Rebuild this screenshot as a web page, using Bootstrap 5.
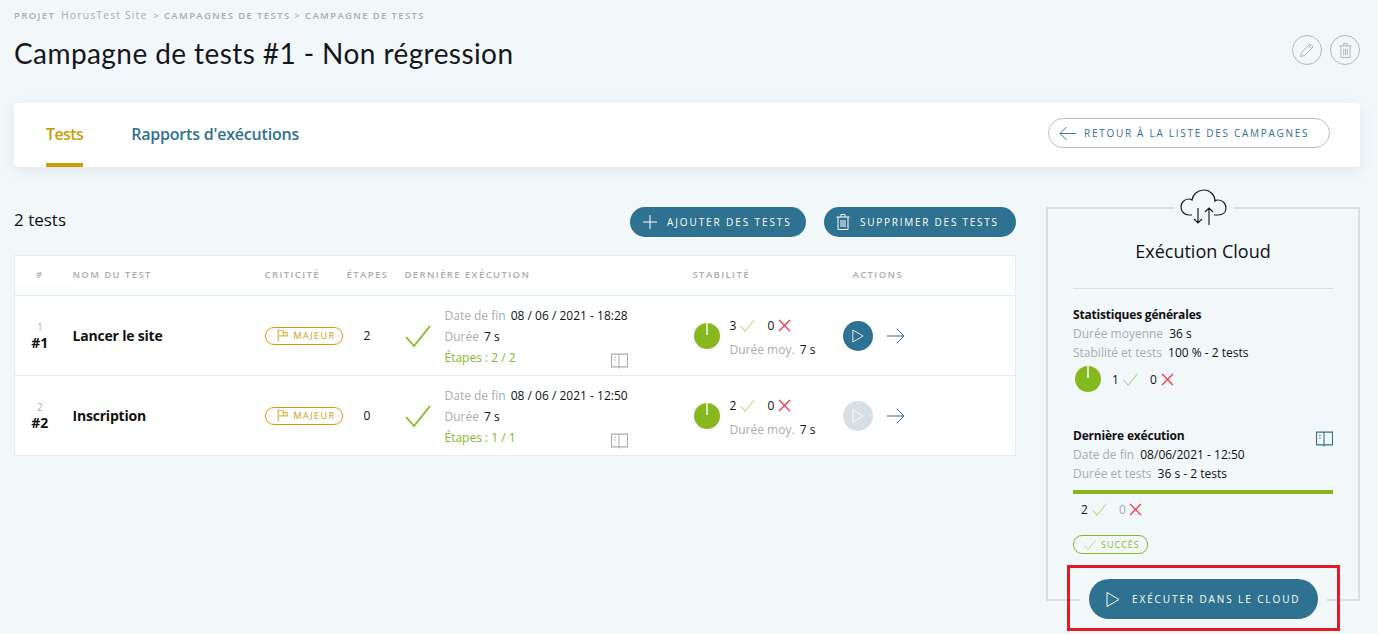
<!DOCTYPE html>
<html lang="fr">
<head>
  <meta charset="UTF-8">
  <meta name="viewport" content="width=device-width, initial-scale=1.0">
  <title>Campagne de tests</title>
  <link href="https://cdn.jsdelivr.net/npm/bootstrap@5.3.5/dist/css/bootstrap.min.css" rel="stylesheet">
  <script src="https://cdn.jsdelivr.net/npm/bootstrap@5.3.5/dist/js/bootstrap.bundle.min.js"></script>
  <style>
    body { background: #f2f7fa; font-family: "Open Sans", "Noto Sans", sans-serif; font-size: 12px; color: #111; overflow: hidden; }
    .page-wrap { padding: 0 18px 0 14px; height: 634px; }
    svg { fill: none; stroke: currentColor; stroke-width: 1; flex: none; }
    .crumbs { height: 30px; padding-top: 9px; font-size: 9.5px; line-height: 13px; letter-spacing: 1.38px; color: #a9adb1; font-weight: 600; text-transform: uppercase; }
    .crumbs .site-name { font-size: 10.5px; font-weight: 400; letter-spacing: 1.1px; text-transform: none; margin: 0 2px; }
    .title-bar { height: 73px; }
    .page-title { font-family: Lato, sans-serif; font-size: 28px; font-weight: 400; letter-spacing: .42px; line-height: 47px; margin: 0; color: #14181c; }
    .round-tool { width: 30px; height: 30px; border: 1px solid #b4b8bb; border-radius: 50%; color: #b0b4b7; margin-top: 5px; }
    .tabs-card { height: 64px; background: #fff; border-radius: 4px; box-shadow: 0 3px 14px rgba(60, 100, 130, .1); padding: 0 30px 0 32px; }
    .tab-link { height: 64px; line-height: 62px; font-size: 16px; font-weight: 600; color: #2f7190; letter-spacing: -.2px; text-decoration: none; }
    .tab-link.on { color: #c99e07; border-bottom: 4px solid #c99e07; letter-spacing: -.6px; }
    .tab-gap { margin-left: 48px; }
    .back-btn { height: 30px; width: 282px; border: 1px solid #bcc1c5; border-radius: 15px; color: #2f7190; font-size: 10px; letter-spacing: 1.72px; text-transform: uppercase; padding-left: 10px; background: none; margin-bottom: 4px; }
    .main-zone { margin-top: 40px; }
    .left-zone { width: 1002px; }
    .tests-count { font-size: 17px; line-height: 24px; margin-bottom: 4px; }
    .pill-btn { height: 30px; border: 0; border-radius: 15px; background: #2f7190; color: #fff; font-size: 10px; font-weight: 500; letter-spacing: 1.75px; text-transform: uppercase; padding: 0 0 0 12px; }
    .add-btn { width: 176px; gap: 9px; }
    .add-btn span { letter-spacing: 1.9px; }
    .del-btn { width: 192px; gap: 10px; }
    .pill-gap { gap: 18px; }
    .tests-table { table-layout: fixed; width: 1002px; background: #fff; border: 1px solid #e6edf0; margin-top: 18px; }
    .tests-table th { height: 40px; font-size: 9.5px; font-weight: 600; letter-spacing: 1.4px; color: #a9adb1; text-transform: uppercase; border-bottom: 1px solid #e6edf0; padding: 0; background: linear-gradient(#fff 70%, #f6f9fb); }
    .tests-table th.actions-head { padding-left: 10px; }
    .tests-table td { height: 80px; padding: 0; border-bottom: 1px solid #e6edf0; vertical-align: middle; }
    .tests-table tr:last-child td { border-bottom: 0; }
    .idx-small { font-size: 10px; line-height: 13px; color: #a9adb1; }
    .idx-big { font-size: 14px; line-height: 17px; font-weight: 700; }
    .test-name { font-size: 14px; font-weight: 700; letter-spacing: -.2px; }
    .crit-tag { width: 78px; height: 18px; border: 1px solid #c99e07; border-radius: 9px; color: #c99e07; font-size: 9px; letter-spacing: 1.45px; margin-top: 3px; padding-left: 11px; gap: 6px; }
    .tests-table td.step-count { padding-left: 17px; }
    .muted-lbl { color: #a9adb1; margin-right: 2px; }
    .info-box { margin: 2px 65px 0 14px; }
    .info-line { line-height: 21.5px; font-size: 12px; white-space: nowrap; }
    .info-first { padding-top: 1px; margin-bottom: -1px; }
    .ok-green { color: #85b91f; }
    .ko-red { color: #f2394a; }
    .stroke-big { stroke-width: 1.800; }
    .stroke-mid { stroke-width: 1.200; }
    .stab-box { gap: 10px; padding-left: 1px; }
    .stab-top { margin-top: 4px; margin-bottom: 2px; }
    .zero-gap { margin-left: 12px; }
    .run-dot { width: 30px; height: 30px; border-radius: 50%; background: #2f7190; color: #fff; }
    .run-dot.off { background: #d9dee2; }
    .act-box { gap: 14px; }
    .go-arrow { color: #2f7190; }
    .book-ico { color: #a9adb1; }
    .cloud-panel { width: 314px; height: 394px; border: 2px solid #d9dee2; padding: 0 25px; position: relative; }
    .cloud-ico { position: absolute; top: -21px; left: 126px; width: 60px; height: 42px; color: #1c2126; background: linear-gradient(transparent 3px, #f2f7fa 3px); }
    .cloud-title { font-size: 18px; line-height: 24px; padding-top: 30px; padding-bottom: 25px; border-bottom: 1px solid #d9dee2; }
    .panel-h { font-size: 12px; font-weight: 700; line-height: 19px; letter-spacing: -.2px; }
    .panel-line { line-height: 19px; font-size: 12px; white-space: nowrap; }
    .panel-line .muted-lbl { margin-right: 3px; }
    .pie-small { margin-left: 2px; margin-right: 3px; }
    .last-run { margin-top: 34px; }
    .last-run svg { margin-top: 3px; margin-bottom: -3px; }
    .full-bar { height: 4px; background: #85b91f; margin-top: 7px; }
    .count-line { margin-top: 6px; }
    .state-tag { width: 75px; height: 19px; border: 1px solid #85b91f; border-radius: 9px; color: #85b91f; font-size: 9px; letter-spacing: 1px; margin-top: 16px; font-weight: 500; padding-left: 10px; gap: 5px; }
    .red-frame { position: absolute; left: 19px; bottom: -32px; width: 273px; height: 66px; border: 3px solid #e01b24; }
    .cloud-btn { width: 229px; height: 40px; border: 0; border-radius: 20px; background: #2f7190; color: #fff; font-size: 10px; font-weight: 500; letter-spacing: 1.9px; text-transform: uppercase; box-shadow: 0 0 0 9px #f2f7fa; padding: 0 0 0 17px; gap: 12px; margin-top: 2px; }
  </style>
</head>
<body>
<svg width="0" height="0" class="position-absolute">
  <symbol id="i-check" viewBox="0 0 26 22"><path d="M1 12l8 9L25 1"/></symbol>
  <symbol id="i-cross" viewBox="0 0 12 12"><path d="M1 1l10 10M11 1L1 11"/></symbol>
  <symbol id="i-play" viewBox="0 0 14 16"><path d="M1 1l12 7-12 7z"/></symbol>
  <symbol id="i-right" viewBox="0 0 18 16"><path d="M0 8h17M10 1l7 7-7 7"/></symbol>
  <symbol id="i-left" viewBox="0 0 18 16"><path d="M18 8H1M8 1L1 8l7 7"/></symbol>
  <symbol id="i-book" viewBox="0 0 16 15"><path d="M.5 1h7v12h-7zM7.500 1h8v12h-8zM7.500 13v1.500M3 4h1.500M3 6.500h1.500"/></symbol>
  <symbol id="i-flag" viewBox="0 0 13 14"><path d="M1.500 0v14M1.500 1.500h6v6h-6M7.500 3.500h5l-1 2 1 2h-5"/></symbol>
  <symbol id="i-trash" viewBox="0 0 14 18"><path d="M.5 4h13M5 4V1.500h4V4M2 4v12.500h10V4M5 7v7M7 7v7M9 7v7"/></symbol>
  <symbol id="i-pen" viewBox="0 0 16 16"><path d="M1.500 14.500l1-4L11 2l3 3-8.500 8.500zM9.500 3.500l3 3"/></symbol>
  <symbol id="i-plus" viewBox="0 0 16 16"><path d="M8 1v14M1 8h14"/></symbol>
  <symbol id="i-cloud" viewBox="0 0 48 38"><path d="M12 27H9C4 27 1 23 1 19s3-8 8-8c1 0 2 0 3 1 1-6 6-10 12-10s11 5 11 11c1-1 2-1 3-1 5 0 8 4 8 8s-3 7-8 7h-4M18 20v15M14 31l4 4 4-4M29 37V20M25 24l4-4 4 4"/></symbol>
</svg>

<div class="page-wrap">
  <div class="crumbs">Projet <span class="site-name">HorusTest Site</span> &gt; Campagnes de tests &gt; Campagne de tests</div>

  <div class="title-bar d-flex justify-content-between align-items-start">
    <h1 class="page-title">Campagne de tests #1 - Non régression</h1>
    <div class="d-flex gap-2">
      <span class="round-tool d-flex align-items-center justify-content-center"><svg width="16" height="16"><use href="#i-pen"/></svg></span>
      <span class="round-tool d-flex align-items-center justify-content-center"><svg width="13" height="17"><use href="#i-trash"/></svg></span>
    </div>
  </div>

  <div class="tabs-card d-flex align-items-center">
    <a class="tab-link on" href="#">Tests</a>
    <a class="tab-link tab-gap" href="#">Rapports d'exécutions</a>
    <button class="back-btn ms-auto d-flex align-items-center gap-2" type="button"><svg width="17" height="15"><use href="#i-left"/></svg>Retour à la liste des campagnes</button>
  </div>

  <div class="main-zone d-flex justify-content-between align-items-start">
    <div class="left-zone">
      <div class="d-flex justify-content-between align-items-center">
        <div class="tests-count">2 tests</div>
        <div class="d-flex pill-gap">
          <button class="pill-btn add-btn d-flex align-items-center" type="button"><svg width="16" height="16"><use href="#i-plus"/></svg><span>Ajouter des tests</span></button>
          <button class="pill-btn del-btn d-flex align-items-center" type="button"><svg width="14" height="18"><use href="#i-trash"/></svg><span>Supprimer des tests</span></button>
        </div>
      </div>

      <table class="tests-table">
        <colgroup><col style="width:58px"><col style="width:192px"><col style="width:82px"><col style="width:58px"><col style="width:288px"><col style="width:150px"><col></colgroup>
        <thead>
          <tr><th class="text-center pe-2">#</th><th>Nom du test</th><th>Criticité</th><th>Étapes</th><th>Dernière exécution</th><th>Stabilité</th><th class="actions-head">Actions</th></tr>
        </thead>
        <tbody>
          <tr>
            <td class="text-center pe-2"><div class="idx-small">1</div><div class="idx-big">#1</div></td>
            <td class="test-name">Lancer le site</td>
            <td><span class="crit-tag d-inline-flex align-items-center"><svg width="11" height="13"><use href="#i-flag"/></svg>MAJEUR</span></td>
            <td class="step-count">2</td>
            <td>
              <div class="d-flex align-items-center">
                <svg class="ok-green stroke-big" width="26" height="22"><use href="#i-check"/></svg>
                <div class="flex-grow-1 info-box">
                  <div class="info-line info-first"><span class="muted-lbl">Date de fin</span> 08 / 06 / 2021 - 18:28</div>
                  <div class="info-line"><span class="muted-lbl">Durée</span> 7 s</div>
                  <div class="info-line ok-green d-flex justify-content-between align-items-end">Étapes : 2 / 2<svg class="book-ico" width="17" height="16"><use href="#i-book"/></svg></div>
                </div>
              </div>
            </td>
            <td>
              <div class="d-flex align-items-center stab-box">
                <svg width="26" height="26" viewBox="0 0 28 28"><circle cx="14" cy="14" r="14" fill="#85b91f" stroke="none"/><path d="M14 0v13" stroke="#fff" stroke-width="1.500"/></svg>
                <div>
                  <div class="info-line stab-top d-flex align-items-center">3<svg class="ok-green stroke-mid ms-1" width="15" height="13"><use href="#i-check"/></svg><span class="zero-gap">0</span><svg class="ko-red stroke-mid ms-1" width="13" height="13"><use href="#i-cross"/></svg></div>
                  <div class="info-line"><span class="muted-lbl">Durée moy.</span> 7 s</div>
                </div>
              </div>
            </td>
            <td>
              <div class="d-flex align-items-center act-box">
                <span class="run-dot d-flex align-items-center justify-content-center"><svg width="12" height="14"><use href="#i-play"/></svg></span>
                <svg class="go-arrow" width="18" height="16"><use href="#i-right"/></svg>
              </div>
            </td>
          </tr>
          <tr>
            <td class="text-center pe-2"><div class="idx-small">2</div><div class="idx-big">#2</div></td>
            <td class="test-name">Inscription</td>
            <td><span class="crit-tag d-inline-flex align-items-center"><svg width="11" height="13"><use href="#i-flag"/></svg>MAJEUR</span></td>
            <td class="step-count">0</td>
            <td>
              <div class="d-flex align-items-center">
                <svg class="ok-green stroke-big" width="26" height="22"><use href="#i-check"/></svg>
                <div class="flex-grow-1 info-box">
                  <div class="info-line info-first"><span class="muted-lbl">Date de fin</span> 08 / 06 / 2021 - 12:50</div>
                  <div class="info-line"><span class="muted-lbl">Durée</span> 7 s</div>
                  <div class="info-line ok-green d-flex justify-content-between align-items-end">Étapes : 1 / 1<svg class="book-ico" width="17" height="16"><use href="#i-book"/></svg></div>
                </div>
              </div>
            </td>
            <td>
              <div class="d-flex align-items-center stab-box">
                <svg width="26" height="26" viewBox="0 0 28 28"><circle cx="14" cy="14" r="14" fill="#85b91f" stroke="none"/><path d="M14 0v13" stroke="#fff" stroke-width="1.500"/></svg>
                <div>
                  <div class="info-line stab-top d-flex align-items-center">2<svg class="ok-green stroke-mid ms-1" width="15" height="13"><use href="#i-check"/></svg><span class="zero-gap">0</span><svg class="ko-red stroke-mid ms-1" width="13" height="13"><use href="#i-cross"/></svg></div>
                  <div class="info-line"><span class="muted-lbl">Durée moy.</span> 7 s</div>
                </div>
              </div>
            </td>
            <td>
              <div class="d-flex align-items-center act-box">
                <span class="run-dot off d-flex align-items-center justify-content-center"><svg width="12" height="14"><use href="#i-play"/></svg></span>
                <svg class="go-arrow" width="18" height="16"><use href="#i-right"/></svg>
              </div>
            </td>
          </tr>
        </tbody>
      </table>
    </div>

    <div class="cloud-panel">
      <div class="cloud-ico d-flex justify-content-center"><svg class="stroke-mid" width="48" height="38"><use href="#i-cloud"/></svg></div>
      <div class="cloud-title text-center">Exécution Cloud</div>

      <div class="panel-h mt-3">Statistiques générales</div>
      <div class="panel-line"><span class="muted-lbl">Durée moyenne</span> 36 s</div>
      <div class="panel-line"><span class="muted-lbl">Stabilité et tests</span> 100 % - 2 tests</div>
      <div class="d-flex align-items-center panel-line mt-1">
        <svg class="pie-small" width="26" height="26" viewBox="0 0 28 28"><circle cx="14" cy="14" r="14" fill="#85b91f" stroke="none"/><path d="M14 0v13" stroke="#fff" stroke-width="1.500"/></svg>
        <span class="ms-2">1</span><svg class="ok-green stroke-mid ms-1" width="15" height="13"><use href="#i-check"/></svg>
        <span class="zero-gap">0</span><svg class="ko-red stroke-mid ms-1" width="13" height="13"><use href="#i-cross"/></svg>
      </div>

      <div class="d-flex justify-content-between align-items-center panel-h last-run">Dernière exécution<svg class="go-arrow" width="17" height="16"><use href="#i-book"/></svg></div>
      <div class="panel-line"><span class="muted-lbl">Date de fin</span> 08/06/2021 - 12:50</div>
      <div class="panel-line"><span class="muted-lbl">Durée et tests</span> 36 s - 2 tests</div>
      <div class="full-bar"></div>
      <div class="d-flex align-items-center panel-line count-line ps-2">
        2<svg class="ok-green stroke-mid ms-1" width="15" height="13"><use href="#i-check"/></svg>
        <span class="zero-gap muted-lbl">0</span><svg class="ko-red stroke-mid" width="13" height="13"><use href="#i-cross"/></svg>
      </div>
      <span class="state-tag d-inline-flex align-items-center"><svg width="12" height="10"><use href="#i-check"/></svg>SUCCÈS</span>

      <div class="red-frame d-flex align-items-center justify-content-center">
        <button class="cloud-btn d-flex align-items-center" type="button"><svg width="14" height="17"><use href="#i-play"/></svg><span>Exécuter dans le cloud</span></button>
      </div>
    </div>
  </div>
</div>
</body>
</html>
